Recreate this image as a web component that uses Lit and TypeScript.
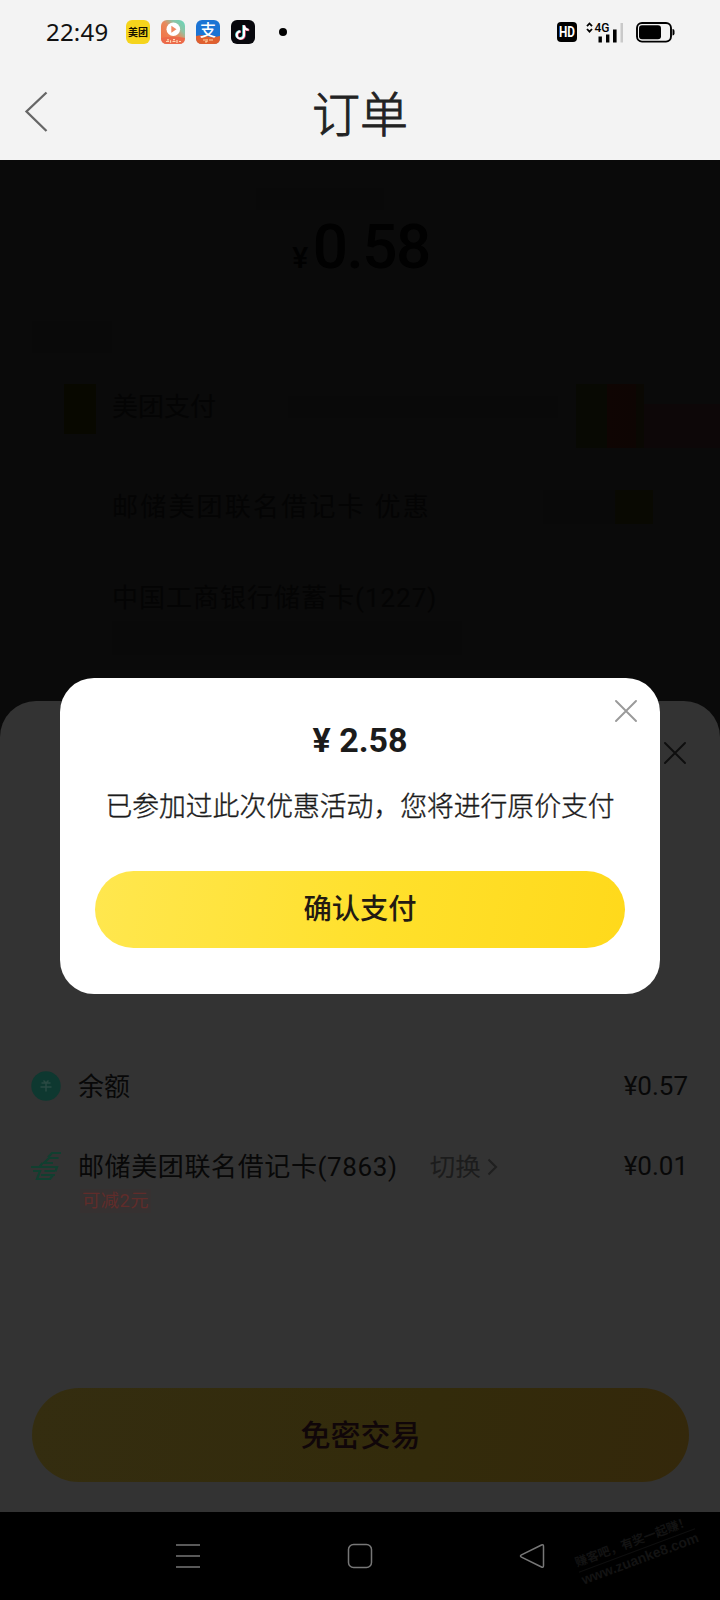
import { LitElement, html, css, svg } from "lit";
import { customElement, property } from "lit/decorators.js";

const appIcons = [
  // Meituan
  svg`<rect width="24" height="24" rx="6" fill="#f5d41c"/><text x="12" y="15.8" text-anchor="middle" font-size="10" font-weight="700" fill="#151000">美团</text>`,
  // Video player
  svg`<defs><linearGradient id="v" x1="1" y1="0" x2="0.2" y2="0.8"><stop offset="0" stop-color="#5fd8bc"/><stop offset=".35" stop-color="#8fc3a4"/><stop offset=".6" stop-color="#e88a5c"/><stop offset="1" stop-color="#f0774a"/></linearGradient></defs>
  <rect width="24" height="24" rx="6" fill="url(#v)"/><circle cx="12.3" cy="9.3" r="6.8" fill="#fff"/><path d="M10.300 5.800v7l5.200-3.500z" fill="#f08a62"/><path d="M0 18Q12 15.500 24 18q0 6-6 6H6q-6 0-6-6z" fill="#ec6a4a"/><path d="M5 21.500h3M9.500 20.300v2.400M11.500 21.500h3M16 20v3M18 21.500h2M6 19.800h2M12 19.700h2" stroke="#ffd9b4" stroke-width="1.200"/>`,
  // Alipay
  svg`<rect width="24" height="24" rx="6" fill="#1b74d4"/><path d="M0 16q7-1.500 12 .5 6 1.500 12-.5V18q0 6-6 6H6q-6 0-6-6z" fill="#e0602f"/><text x="12" y="15.500" text-anchor="middle" font-size="16" font-weight="500" fill="#fff">支</text><path d="M7 20h3M11 19v3M13 20h4M9 21.800h2" stroke="#ffd0a0" stroke-width="1.200"/>`,
  // Douyin
  svg`<rect width="24" height="24" rx="6" fill="#08080d"/><g fill="none" stroke-width="2.100"><path d="M12.300 5v9.800a3.600 3.600 0 1 1-3.600-3.600M12.300 5.500c.3 2.400 2 4 4.600 4.100" stroke="#4fd6dc"/><path d="M13.700 5.600v9.800a3.600 3.600 0 1 1-3.600-3.600M13.700 6c.3 2.400 2 4 4.600 4.100" stroke="#e5476a"/><path d="M13 5.200v9.800a3.600 3.600 0 1 1-3.600-3.600M13 5.700c.3 2.400 2 4 4.600 4.100" stroke="#fff"/></g>`,
];

@customElement("status-bar")
class StatusBar extends LitElement {
  static styles = css`
    :host { display: flex; align-items: center; height: 64px; box-sizing: border-box; padding: 0 45px 0 46px; color: #111; }
    .time { font: 400 24px/32px "Noto Sans", sans-serif; width: 80px; letter-spacing: 0.2px; }
    .apps { display: flex; gap: 11px; }
    .apps svg { font-family: "Noto Sans CJK SC", sans-serif; overflow: visible; }
    .dot { width: 8px; height: 8px; border-radius: 50%; background: #000; margin-left: 24px; }
    .right { margin-left: auto; display: flex; align-items: center; }
    svg { display: block; }
    .hd, .net { font-family: "Roboto", sans-serif; overflow: visible; }
    .net { margin-left: 9px; }
    .battery { margin-left: 12px; }
  `;
  render() {
    return html`
      <span class="time">22:49</span>
      <div class="apps">${appIcons.map((i) => html`<svg width="24" height="24" viewBox="0 0 24 24">${i}</svg>`)}</div>
      <i class="dot"></i>
      <div class="right">
        <svg class="hd" width="20" height="20" viewBox="0 0 20 20"><rect width="20" height="20" rx="4" fill="#000"/><text x="10" y="15.200" text-anchor="middle" font-size="14.500" font-weight="700" fill="#fff" textLength="16" lengthAdjust="spacingAndGlyphs">HD</text></svg>
        <svg class="net" width="38" height="22" viewBox="0 0 38 22">
          <path d="M1 5.200 3.500 2.500 6 5.200M1 8 3.500 10.700 6 8" fill="none" stroke="#000" stroke-width="1.800"/>
          <text x="8.500" y="11.300" font-size="13.500" font-weight="500" textLength="15" lengthAdjust="spacingAndGlyphs">4G</text>
          <path d="M12.500 15.500h3.400v6h-3.400zM20 13.500h3.400v8H20zM27 8.500h3.600v13H27z"/><path d="M34.500 2h2.500v19.500h-2.500z" fill="#c9c9c9"/>
        </svg>
        <svg class="battery" width="39" height="21" viewBox="0 0 39 21"><rect x="1" y="1" width="34" height="18.600" rx="5" fill="none" stroke="#000" stroke-width="1.900"/><rect x="3" y="3.300" width="22" height="14" rx="3"/><path d="M36.500 7q2 0 2 2v2.500q0 2-2 2z"/></svg>
      </div>`;
  }
}

@customElement("close-icon")
class CloseIcon extends LitElement {
  static styles = css`:host { display: block; } svg { display: block; }`;
  render() {
    return html`<svg width="22" height="22" viewBox="0 0 22 22"><path d="M1 1 21 21M21 1 1 21" stroke="currentColor" stroke-width="1.900" fill="none" stroke-linecap="round"/></svg>`;
  }
}

@customElement("cashier-page")
class CashierPage extends LitElement {
  static styles = css`
    :host { display: flex; flex-direction: column; background: #0a0a0a; color: #030303; font: 26px/36px "Roboto", "Noto Sans CJK SC", sans-serif; }
    .timer { width: 128px; height: 22px; background: #090909; margin: 28px 0 0 256px; }
    .price { display: flex; justify-content: center; align-items: baseline; gap: 6px; height: 62px; font-weight: 500; font-size: 62px; line-height: 72px; margin-top: 1px; padding-left: 2px; color: #010101; letter-spacing: -1.5px; }
    .price small { font-size: 30px; }
    .label { width: 80px; height: 32px; background: #090909; margin: 48px 0 0 32px; }
    .row { display: flex; align-items: center; height: 66px; margin-top: 30px; padding-left: 64px; color: #040404; }
    .pay { margin-top: 23px; align-items: flex-start; }
    .mark { width: 32px; height: 50px; margin: 8px 16px 0 0; background: #080800; }
    .name { margin-top: 13px; }
    .faint { width: 270px; height: 22px; background: #090909; margin: 20px 0 0 72px; }
    .red { width: 68px; height: 64px; margin: 8px 0 0 18px; background: linear-gradient(90deg, #080903 45%, #0f0503 46%, #0e0503 88%, #0a0803 89%); }
    .wine { width: 76px; height: 44px; background: #0d0708; margin-top: 28px; }
    .gap { width: 48px; flex: none; }
    .second { height: 44px; margin-top: 43px; }
    .tag { width: 110px; height: 34px; margin-left: 112px; background: linear-gradient(90deg, #090909 65%, #090902 66%); }
    .third { height: 44px; margin-top: 47px; letter-spacing: 1px; }
    .note { width: 350px; height: 34px; background: #090909; margin: 1px 0 0 112px; }
    .wide { letter-spacing: 2.2px; }
  `;
  render() {
    return html`
      <div class="timer"></div>
      <div class="price"><small>¥</small><span>0.58</span></div>
      <div class="label"></div>
      <div class="row pay"><i class="mark"></i><span class="name">美团支付</span><i class="faint"></i><i class="red"></i><i class="wine"></i></div>
      <div class="row second"><i class="gap"></i><span class="wide">邮储美团联名借记卡 优惠</span><i class="tag"></i></div>
      <div class="row third"><i class="gap"></i><span>中国工商银行储蓄卡(1227)</span></div>
      <div class="note"></div>`;
  }
}

@customElement("pay-row")
class PayRow extends LitElement {
  @property() name = "";
  @property() amount = "";
  @property({ type: Boolean }) card = false;
  static styles = css`
    :host { display: flex; align-items: center; height: 40px; color: #080808; font: 26px/40px "Roboto", "Noto Sans CJK SC", sans-serif; }
    svg { display: block; }
    .logo { width: 30px; margin: 0 16px 0 -1px; }
    .name { margin-left: 1px; position: relative; top: 1px; }
    .card { letter-spacing: 0.62px; }
    .switch { display: flex; align-items: center; color: #1c1c1c; margin-left: 32px; font-size: 25.500px; gap: 6px; position: relative; top: 1px; }
    .amount { margin-left: auto; }
  `;
  render() {
    const logo = this.card
      ? html`<svg width="30" height="30" viewBox="0 0 30 30"><path d="M30 2H21L17 6.500M27.500 7H18l-5 5h9M11.500 12l-3 4M0 16h26l-1.500 4.500M2 20h7l-3 8h13l3-4M13.500 20H24M10 24h14" fill="none" stroke="#113f30" stroke-width="2.200"/></svg>`
      : html`<svg width="30" height="30" viewBox="0 0 30 30"><circle cx="15" cy="15" r="14.700" fill="#0e3830"/><path d="M10.500 12h9M9.500 16h11M15 12v8.500M12.500 9.500 15 12l2.500-2.500" fill="none" stroke="#2a4a43" stroke-width="1.500"/></svg>`;
    return html`
      <span class="logo">${logo}</span>
      <span class="name ${this.card ? "card" : ""}">${this.name}</span>
      ${this.card ? html`<span class="switch">切换<svg width="11" height="18" viewBox="0 0 11 18"><path d="M1.500 1.500 9 9 1.500 16.500" fill="none" stroke="#1f1f1f" stroke-width="2"/></svg></span>` : ""}
      <span class="amount">${this.amount}</span>`;
  }
}

@customElement("pay-sheet")
class PaySheet extends LitElement {
  static styles = css`
    :host { display: flex; flex-direction: column; box-sizing: border-box; background: #333; border-radius: 36px 36px 0 0; padding: 42px 32px 30px; font-family: "Roboto", "Noto Sans CJK SC", sans-serif; }
    .close { align-self: flex-end; margin: -1px 2px 0 0; color: #0e0e0e; }
    .rows { display: flex; flex-direction: column; gap: 40px; margin-top: 302px; }
    .coupon { align-self: flex-start; margin: 3px 0 0 48px; padding: 0 2px; font-size: 18.300px; letter-spacing: 0.5px; line-height: 24px; color: #602c2a; background: #363131; }
    .pay { margin-top: auto; height: 94px; border-radius: 47px; background: linear-gradient(100deg, #342d10, #332b0b 60%, #34280b); color: #100609; display: flex; align-items: center; justify-content: center; font-size: 30px; line-height: 40px; font-weight: 500; margin-right: -1px; padding-top: 1px; box-sizing: border-box; }
  `;
  render() {
    return html`
      <close-icon class="close"></close-icon>
      <div class="rows">
        <pay-row name="余额" amount="¥0.57"></pay-row>
        <pay-row card name="邮储美团联名借记卡(7863)" amount="¥0.01"></pay-row>
      </div>
      <span class="coupon">可减2元</span>
      <div class="pay">免密交易</div>`;
  }
}

@customElement("confirm-dialog")
class ConfirmDialog extends LitElement {
  static styles = css`
    :host { display: flex; flex-direction: column; box-sizing: border-box; background: #fff; border-radius: 34px; padding: 22px 35px 46px; font-family: "Roboto", "Noto Sans CJK SC", sans-serif; color: #1b1b1b; text-align: center; }
    .close { align-self: flex-end; margin-right: -12px; color: #9a9a9a; }
    .sum { font-weight: 700; font-size: 34px; line-height: 40px; margin-top: -2px; }
    .msg { font-size: 26.800px; line-height: 40px; margin: 27px -10px 0; white-space: nowrap; font-weight: 300; -webkit-text-stroke: 0.4px #1b1b1b; }
    .ok { margin-top: auto; height: 77px; border-radius: 39px; background: linear-gradient(100deg, #ffe74f, #ffe02b 55%, #ffd91b); display: flex; align-items: center; justify-content: center; font-size: 28.300px; line-height: 40px; font-weight: 500; color: #231a12; }
  `;
  render() {
    return html`
      <close-icon class="close"></close-icon>
      <div class="sum">¥ 2.58</div>
      <div class="msg">已参加过此次优惠活动，您将进行原价支付</div>
      <div class="ok">确认支付</div>`;
  }
}

@customElement("nav-bar")
class NavBar extends LitElement {
  static styles = css`
    :host { display: flex; align-items: center; justify-content: center; gap: 146px; height: 88px; background: #000; position: relative; }
    svg { display: block; }
    .wm { position: absolute; left: 575px; top: 21px; transform: rotate(-20.5deg); color: #131313; font: 700 12.200px/17px "Liberation Sans", "Noto Sans CJK SC", sans-serif; white-space: nowrap; }
    .line { border-bottom: 1px solid #0e0e0e; }
    .url { font-size: 14px; letter-spacing: 0; }
  `;
  render() {
    const p = "#777";
    return html`
      <svg width="26" height="26" viewBox="0 0 26 26"><path d="M1 2h24M1 13h24M1 24h24" stroke=${p} stroke-width="1.700"/></svg>
      <svg width="26" height="26" viewBox="0 0 26 26"><rect x="1.500" y="1.500" width="23" height="23" rx="5" fill="none" stroke=${p} stroke-width="1.500"/></svg>
      <svg width="26" height="26" viewBox="0 0 26 26"><path d="M22.500 2Q24.500 1 24.500 3.500v19q0 2.500-2 1.500L2.500 14.200q-2-1.200 0-2.400z" fill="none" stroke=${p} stroke-width="1.500"/></svg>
      <div class="wm"><div class="line">赚客吧，有奖一起赚！</div><div class="url">www.zuanke8.com</div></div>`;
  }
}

@customElement("app-root")
class AppRoot extends LitElement {
  static styles = css`
    :host { display: flex; flex-direction: column; width: 720px; height: 1600px; background: #f3f3f3; overflow: hidden; }
    .head { height: 96px; display: grid; grid-template-columns: 72px 1fr 72px; align-items: center; }
    .back { display: block; margin-left: 24px; }
    .title { text-align: center; font: 300 48px/64px "Noto Sans CJK SC", sans-serif; color: #222; -webkit-text-stroke: 0.9px #222; margin-top: -3px; }
    .stage { flex: 1; display: grid; grid-template-rows: 541px 1fr; position: relative; background: #0a0a0a; }
    .dialog { position: absolute; left: 60px; top: 518px; width: 600px; height: 316px; }
  `;
  render() {
    return html`
      <status-bar></status-bar>
      <div class="head">
        <svg class="back" width="26" height="42" viewBox="0 0 26 42"><path d="M22.500 1.500 2.500 20.500 22.500 40" fill="none" stroke="#666" stroke-width="2.300"/></svg>
        <span class="title">订单</span>
      </div>
      <div class="stage">
        <cashier-page></cashier-page>
        <pay-sheet></pay-sheet>
        <confirm-dialog class="dialog"></confirm-dialog>
      </div>
      <nav-bar></nav-bar>`;
  }
}
